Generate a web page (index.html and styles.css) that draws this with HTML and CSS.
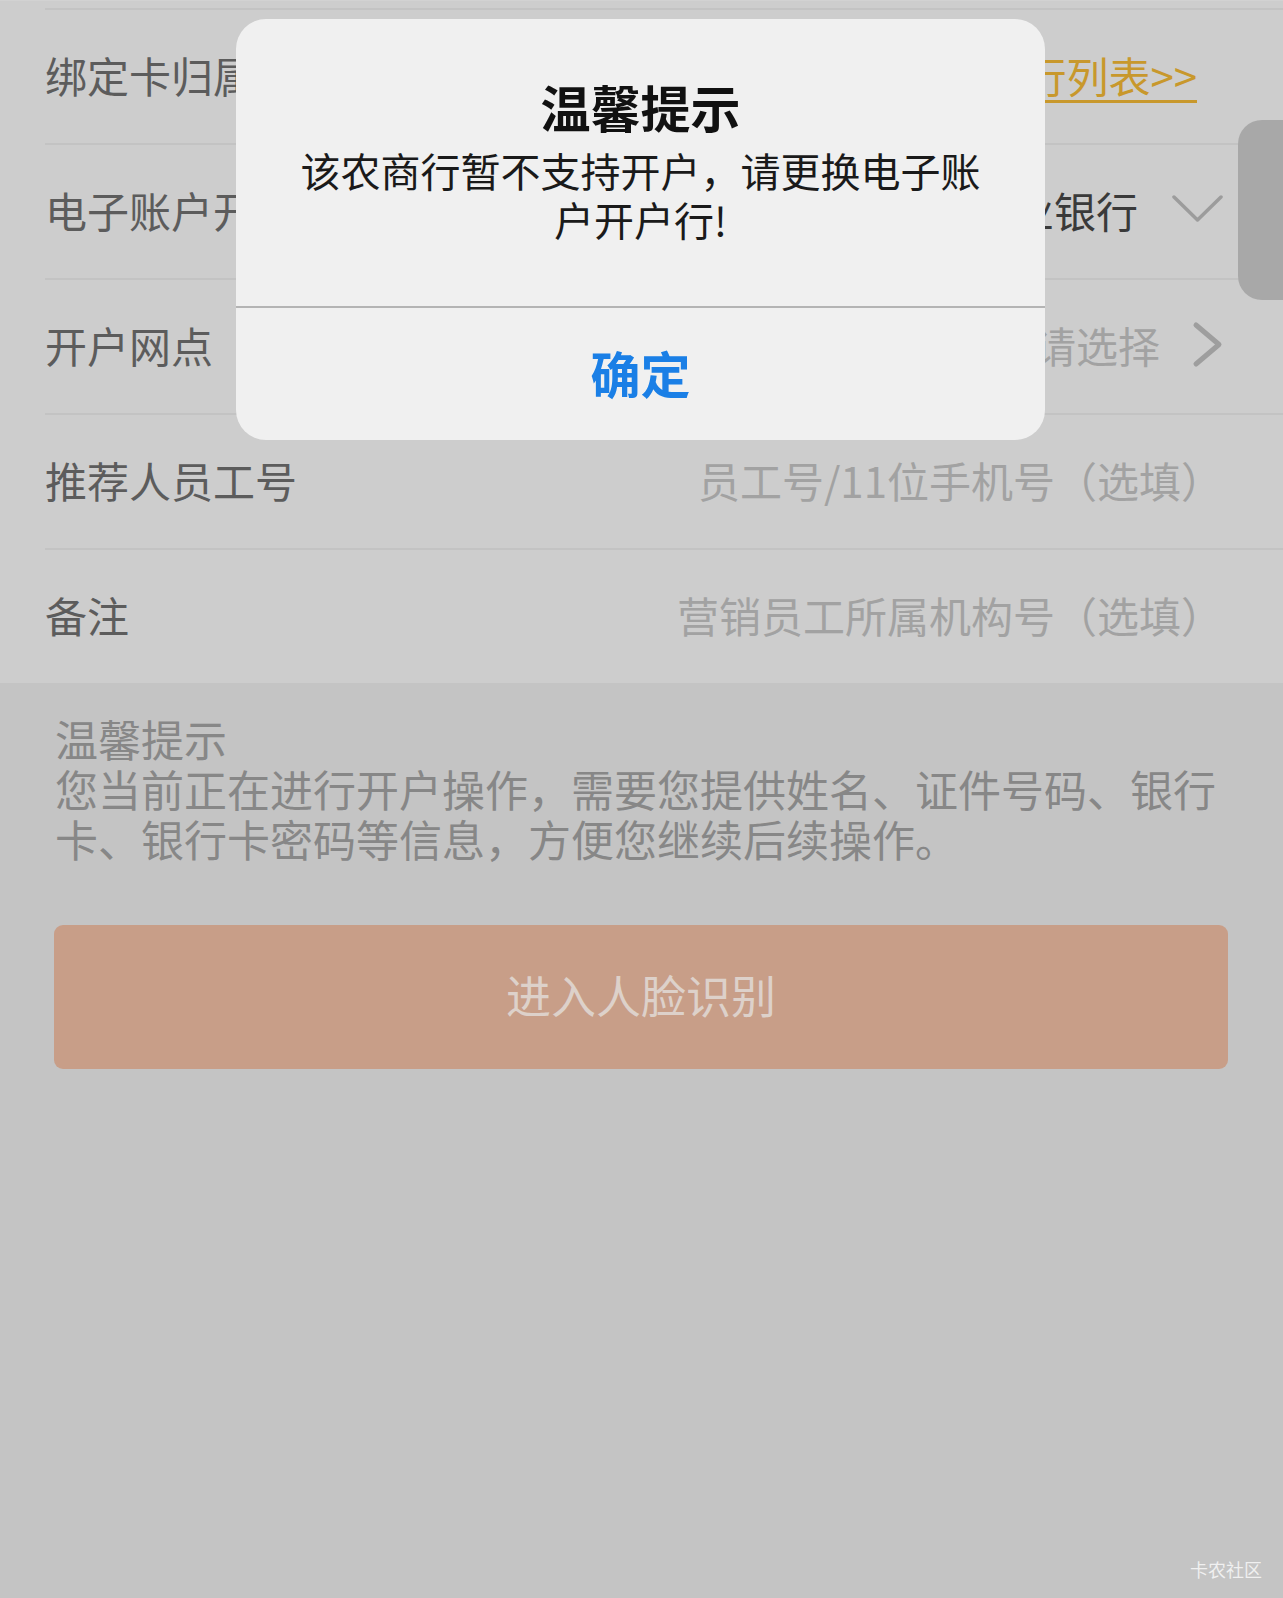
FILE: index.html
```html
<!DOCTYPE html>
<html lang="zh-CN">

<head>
    <meta charset="UTF-8">
    <meta name="viewport" content="width=device-width, initial-scale=1.0">
    <title>电子账户开户</title>
    <link rel="stylesheet" href="styles.css">
</head>

<body>
    <!-- Form rows -->
    <div class="form">
        <div class="row">
            <span class="label">绑定卡归属银行</span>
            <a class="link" href="#">查看支持银行列表&gt;&gt;</a>
        </div>
        <div class="row">
            <span class="label">电子账户开户行</span>
            <span class="value">农村商业银行</span>
            <svg class="chevronDown" width="51" height="28" viewBox="0 0 51 28">
                <polyline points="2,2 25.5,25 49,2" fill="none" stroke="#9c9c9c" stroke-width="3.5" stroke-linecap="round" stroke-linejoin="round" />
            </svg>
        </div>
        <div class="row">
            <span class="label">开户网点</span>
            <span class="placeholder">请选择</span>
            <svg class="chevronRight" width="31" height="47" viewBox="0 0 31 47">
                <polyline points="4,4 27,23.5 4,43" fill="none" stroke="#9e9e9e" stroke-width="5" stroke-linecap="round" stroke-linejoin="round" />
            </svg>
        </div>
        <div class="row">
            <span class="label">推荐人员工号</span>
            <span class="placeholder end">员工号/11位手机号（选填）</span>
        </div>
        <div class="row">
            <span class="label">备注</span>
            <span class="placeholder end">营销员工所属机构号（选填）</span>
        </div>
    </div>

    <!-- Tips -->
    <div class="tips">
        <p>温馨提示</p>
        <p>您当前正在进行开户操作，需要您提供姓名、证件号码、银行卡、银行卡密码等信息，方便您继续后续操作。</p>
    </div>

    <button class="faceButton">进入人脸识别</button>

    <!-- Floating handle on the right edge -->
    <div class="sideHandle"></div>

    <!-- Alert -->
    <div class="alert">
        <div class="alertBody">
            <h2>温馨提示</h2>
            <p>该农商行暂不支持开户，请更换电子账户开户行!</p>
        </div>
        <div class="alertButton">确定</div>
    </div>

    <span class="watermark">卡农社区</span>
</body>

</html>
```

FILE: styles.css
```css
body {
    margin: 0;
    position: relative;
    height: 1598px;
    overflow: hidden;
    background: #c4c4c4;
    font-family: "Noto Sans CJK SC", "Noto Sans", sans-serif;
}

.form {
    background: #cdcdcd;
    padding-top: 7px;
    border-top: 1px solid #d2d2d2;
}

.row {
    display: flex;
    align-items: center;
    height: 128px;
    padding-bottom: 5px;
    margin-left: 45px;
    padding-right: 60px;
    border-top: 2px solid #c3c3c3;
}

.label {
    font-size: 42px;
    color: #5c5c5c;
    white-space: nowrap;
}

.link {
    margin-left: auto;
    margin-right: 26px;
    font-size: 42px;
    color: #c8982c;
    text-decoration: underline;
    text-decoration-thickness: 3px;
    text-underline-offset: 7px;
    white-space: nowrap;
}

.value {
    margin-left: auto;
    margin-right: 34px;
    font-size: 42px;
    color: #3a3a3a;
    white-space: nowrap;
}

.placeholder {
    margin-left: auto;
    margin-right: 32px;
    font-size: 42px;
    color: #a2a2a2;
    white-space: nowrap;
}

.placeholder.end {
    margin-right: 0;
}

.chevronDown,
.chevronRight {
    display: block;
    flex: none;
}

.tips {
    padding: 30px 0 0 55px;
    width: 1180px;
}

.tips p {
    margin: 0;
    font-size: 43px;
    line-height: 50px;
    color: #878787;
}

.faceButton {
    display: block;
    margin: 62px 0 0 54px;
    padding-bottom: 7px;
    width: 1174px;
    height: 144px;
    border: none;
    border-radius: 9px;
    background: #c89e88;
    color: #ddd1ca;
    font-family: "Noto Sans CJK SC", "Noto Sans", sans-serif;
    font-size: 45px;
}

.sideHandle {
    position: absolute;
    left: 1238px;
    top: 120px;
    width: 80px;
    height: 180px;
    border-radius: 24px;
    background: #a8a8a8;
}

.alert {
    position: absolute;
    left: 236px;
    top: 19px;
    width: 809px;
    border-radius: 30px;
    background: #f0f0f0;
    overflow: hidden;
    text-align: center;
}

.alertBody {
    padding: 57px 55px 62px;
    border-bottom: 2px solid #b4b4b4;
}

.alertBody h2 {
    margin: 0;
    font-size: 50px;
    line-height: 60px;
    font-weight: 700;
    color: #111;
}

.alertBody p {
    margin: 10px 0 0;
    font-size: 40px;
    line-height: 49px;
    color: #1a1a1a;
}

.alertButton {
    height: 132px;
    line-height: 128px;
    font-size: 50px;
    font-weight: 700;
    color: #1a7fe6;
}

.watermark {
    position: absolute;
    right: 21px;
    top: 1556px;
    font-size: 18px;
    color: rgba(255, 255, 255, 0.75);
}
```
